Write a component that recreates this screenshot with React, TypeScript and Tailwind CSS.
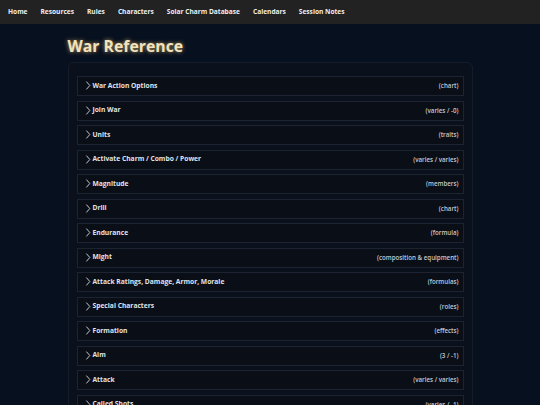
const navItems = [
  "Home",
  "Resources",
  "Rules",
  "Characters",
  "Solar Charm Database",
  "Calendars",
  "Session Notes",
];

const sections: [string, string][] = [
  ["War Action Options", "(chart)"],
  ["Join War", "(varies / -0)"],
  ["Units", "(traits)"],
  ["Activate Charm / Combo / Power", "(varies / varies)"],
  ["Magnitude", "(members)"],
  ["Drill", "(chart)"],
  ["Endurance", "(formula)"],
  ["Might", "(composition & equipment)"],
  ["Attack Ratings, Damage, Armor, Morale", "(formulas)"],
  ["Special Characters", "(roles)"],
  ["Formation", "(effects)"],
  ["Aim", "(3 / -1)"],
  ["Attack", "(varies / varies)"],
  ["Called Shots", "(varies / -1)"],
  ["Rout", "(varies / -0)"],
];

function Chevron() {
  return (
    <svg width="6" height="9" viewBox="0 0 6 9" className="shrink-0">
      <path d="M1.4 0.6 L4.8 4.5 L1.4 8.4" fill="none" stroke="#d8dbe2" strokeWidth="0.9" />
    </svg>
  );
}

export default function App() {
  return (
    <div
      className="min-h-[405px] bg-[#07101f] text-[#e4e6ea]"
      style={{ fontFamily: '"Open Sans", "Noto Sans", sans-serif' }}
    >
      <nav className="flex h-[24px] items-center gap-[13px] bg-[#222222] px-[8px] text-[6.6px] font-bold text-[#eeeeee]">
        {navItems.map((n) => (
          <span key={n}>{n}</span>
        ))}
      </nav>

      <main className="mx-auto w-[405px] pt-[11px]">
        <h1 className="text-[15.8px] leading-[22px] font-bold text-[#f3e3bd] [text-shadow:0_0_4px_rgba(240,200,120,0.75)]">
          War Reference
        </h1>

        <div className="mt-[5px] flex flex-col gap-[4.5px] rounded-[5px] border border-[#151b27] bg-[#0b111c] px-[8px] pt-[13px] pb-[12px]">
          {sections.map(([title, note]) => (
            <div
              key={title}
              className="flex h-[20px] items-center justify-between border border-[#1d2330] bg-[#0a0e17] pr-[4px] pl-[7px]"
            >
              <div className="flex items-center gap-[2px] text-[6.7px] font-bold text-[#e0e3e8]">
                <Chevron />
                <span>{title}</span>
              </div>
              <span className="text-[6.2px] font-semibold text-[#c4c8d0]">{note}</span>
            </div>
          ))}
        </div>
      </main>
    </div>
  );
}
